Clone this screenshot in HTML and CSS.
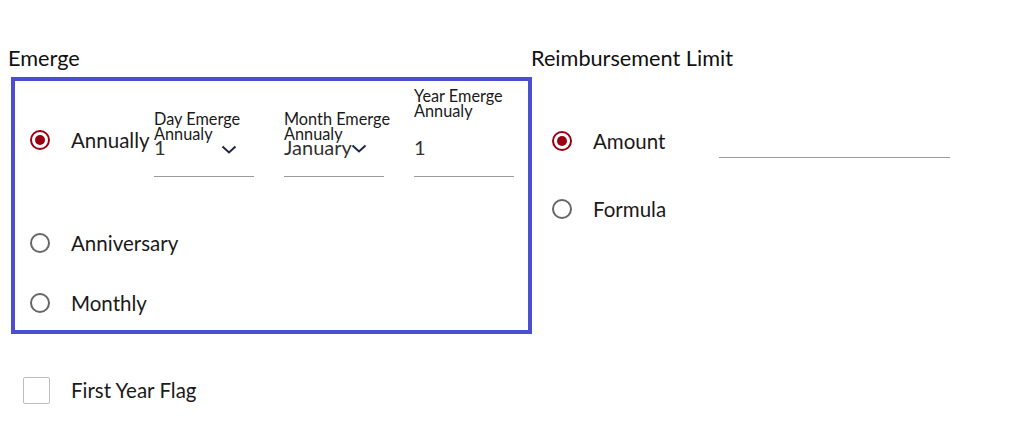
FILE: index.html
```html
<!DOCTYPE html>
<html lang="en">
<head>
<meta charset="utf-8">
<title>Emerge</title>
<link rel="stylesheet" href="styles.css">
</head>
<body>
<div class="page">
  <section class="col-left">
    <h2 class="section-title">Emerge</h2>
    <div class="emerge-box">
      <div class="row row-annual">
        <span class="radio checked"></span>
        <span class="opt-label opt-annual">Annually</span>
        <div class="fields">
          <div class="field">
            <div class="field-label low">Day Emerge<br>Annualy</div>
            <div class="field-value">1
              <svg class="chev" width="16" height="9" viewBox="0 0 16 9"><polyline points="1.5,1.5 8,7.5 14.5,1.5" fill="none" stroke="#1b2744" stroke-width="2"/></svg>
            </div>
          </div>
          <div class="field">
            <div class="field-label low">Month Emerge<br>Annualy</div>
            <div class="field-value">January
              <svg class="chev chev-month" width="16" height="9" viewBox="0 0 16 9"><polyline points="1.5,1.5 8,7.5 14.5,1.5" fill="none" stroke="#1b2744" stroke-width="2"/></svg>
            </div>
          </div>
          <div class="field">
            <div class="field-label high">Year Emerge<br>Annualy</div>
            <div class="field-value">1</div>
          </div>
        </div>
      </div>
      <div class="row row-opt row-anniv">
        <span class="radio"></span>
        <span class="opt-label">Anniversary</span>
      </div>
      <div class="row row-opt row-month">
        <span class="radio"></span>
        <span class="opt-label">Monthly</span>
      </div>
    </div>
    <div class="row row-check">
      <span class="checkbox"></span>
      <span class="opt-label">First Year Flag</span>
    </div>
  </section>
  <section class="col-right">
    <h2 class="section-title">Reimbursement Limit</h2>
    <div class="row row-amount">
      <span class="radio checked"></span>
      <span class="opt-label opt-amount">Amount</span>
      <div class="amount-input"></div>
    </div>
    <div class="row row-formula">
      <span class="radio"></span>
      <span class="opt-label">Formula</span>
    </div>
  </section>
</div>
</body>
</html>
```

FILE: styles.css
```css
* { box-sizing: border-box; }

body {
  margin: 0;
  background: #ffffff;
  font-family: Lato, "Open Sans", "Liberation Sans", sans-serif;
  color: #1a1a1a;
}

.page {
  display: flex;
  padding: 46px 0 0 8px;
}

.col-left {
  width: 523px;
  flex: none;
}

.col-right {
  flex: 1;
}

.section-title {
  margin: 0;
  font-size: 21.7px;
  line-height: 24px;
  font-weight: 400;
  color: #111;
}

.emerge-box {
  margin: 7px 0 0 3px;
  width: 521px;
  height: 257px;
  border: 4px solid #4a4fd0;
  padding: 7px 15px 0 15px;
}

.row {
  display: flex;
  align-items: center;
}

.radio {
  flex: none;
  width: 20px;
  height: 20px;
  border: 2px solid #666;
  border-radius: 50%;
  margin-right: 21px;
  position: relative;
}

.radio.checked {
  border-color: #990012;
}

.radio.checked::after {
  content: "";
  position: absolute;
  left: 3px;
  top: 3px;
  width: 10px;
  height: 10px;
  border-radius: 50%;
  background: #990012;
}

.opt-label {
  font-size: 20.5px;
  line-height: 24px;
  color: #1a1a1a;
}

.opt-annual {
  width: 83px;
  flex: none;
  white-space: nowrap;
}

.fields {
  display: flex;
  align-items: flex-end;
  gap: 30px;
  padding-bottom: 14px;
}

.field {
  width: 100px;
  position: relative;
}

.field-label {
  font-size: 16.3px;
  line-height: 15px;
  color: #1a1a1a;
  white-space: nowrap;
}

.field-label.low { margin-bottom: -5px; }
.field-label.high { margin-bottom: 18px; }

.field-value {
  position: relative;
  font-size: 20px;
  line-height: 22px;
  color: #333;
  padding-bottom: 18px;
  border-bottom: 1px solid #9a9a9a;
}

.chev {
  position: absolute;
  right: 17px;
  top: 9px;
}

.chev-month { top: 8px; }

.row-opt { height: 40px; }
.row-anniv { margin-top: 32px; }
.row-month { margin-top: 20px; }

.row-check {
  margin-top: 42px;
  height: 28px;
  padding-left: 15px;
}

.checkbox {
  flex: none;
  width: 27px;
  height: 27px;
  border: 1px solid #bdbdbd;
  border-radius: 2px;
  margin-right: 21px;
}

.row-amount {
  margin-top: 51px;
  height: 40px;
  padding-left: 21px;
}

.opt-amount {
  width: 126px;
  flex: none;
}

.amount-input {
  width: 231px;
  height: 32px;
  margin-top: 2px;
  border-bottom: 1px solid #9a9a9a;
}

.row-formula {
  margin-top: 28px;
  height: 40px;
  padding-left: 21px;
}
```
